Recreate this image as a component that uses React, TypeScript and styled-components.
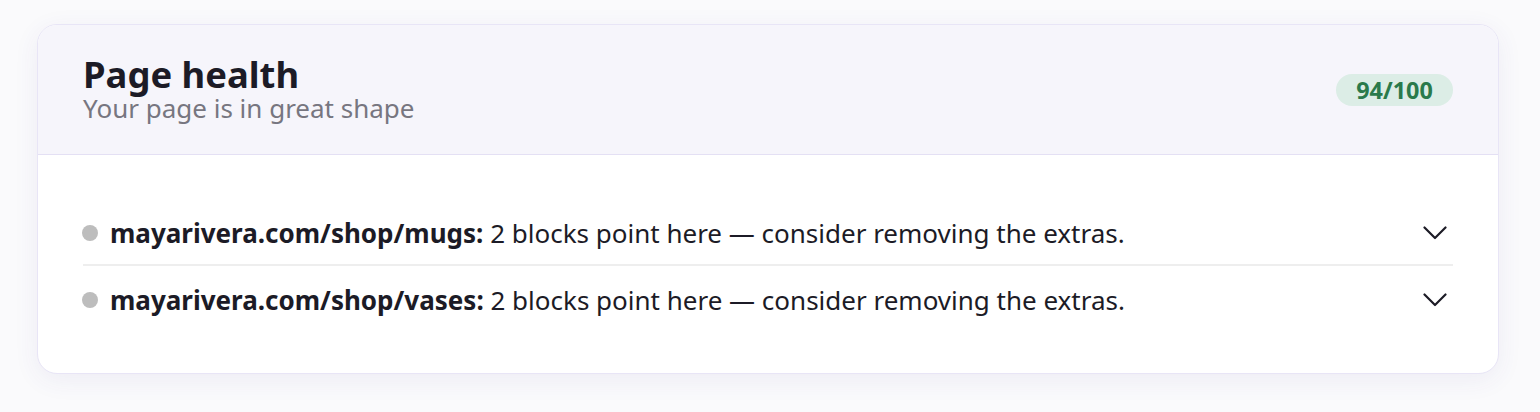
import styled, { createGlobalStyle } from "styled-components";

const GlobalStyle = createGlobalStyle`
  body {
    margin: 0;
    background: #fafafc;
    font-family: "Noto Sans", "Open Sans", sans-serif;
    color: #1c1b26;
  }
`;

const issues = [
  { url: "mayarivera.com/shop/mugs", text: "2 blocks point here — consider removing the extras." },
  { url: "mayarivera.com/shop/vases", text: "2 blocks point here — consider removing the extras." },
];

function Chevron() {
  return (
    <svg width="24" height="24" viewBox="0 0 24 24" fill="none" stroke="#1c1b26" strokeWidth="2.2" strokeLinecap="round" strokeLinejoin="round">
      <path d="M1.5 6.5l10.5 10.5 10.5-10.5" />
    </svg>
  );
}

export default function App() {
  return (
    <>
      <GlobalStyle />
      <Page>
        <Card>
          <Header>
            <div>
              <Title>Page health</Title>
              <Subtitle>Your page is in great shape</Subtitle>
            </div>
            <Score>94/100</Score>
          </Header>
          <Body>
            {issues.map((issue, i) => (
              <Row key={issue.url} $first={i === 0}>
                <Dot />
                <RowText>
                  <strong>{issue.url}:</strong> {issue.text}
                </RowText>
                <Toggle aria-label="Expand">
                  <Chevron />
                </Toggle>
              </Row>
            ))}
          </Body>
        </Card>
      </Page>
    </>
  );
}

const Page = styled.div`
  padding: 24px 41px 38px 37px;
`;

const Card = styled.div`
  background: #fff;
  border: 1px solid #e8e5f6;
  border-radius: 20px;
  overflow: hidden;
  box-shadow: 0 6px 26px rgba(70, 60, 140, 0.07);
`;

const Header = styled.div`
  display: flex;
  align-items: center;
  justify-content: space-between;
  height: 130px;
  padding: 0 45px 4px;
  background: #f6f5fb;
  border-bottom: 1px solid #e4e0f4;
  box-sizing: border-box;
`;

const Title = styled.h1`
  margin: 0;
  font-size: 36.4px;
  font-weight: 700;
  line-height: 40px;
  color: #1c1b26;
`;

const Subtitle = styled.p`
  margin: 0;
  font-size: 26px;
  line-height: 28px;
  color: #777680;
`;

const Score = styled.span`
  display: inline-flex;
  align-items: center;
  justify-content: center;
  width: 117px;
  height: 32px;
  margin-top: 4px;
  border-radius: 16px;
  background: #dcede6;
  color: #2a7a4b;
  font-size: 23.4px;
  font-weight: 700;
`;

const Body = styled.div`
  padding: 44px 45px 42px;
`;

const Row = styled.div<{ $first: boolean }>`
  display: flex;
  align-items: center;
  gap: 12px;
  padding: 16px 0 13px;
  border-top: ${(p) => (p.$first ? "none" : "2px solid #eeeeee")};
`;

const Dot = styled.span`
  flex: none;
  width: 16px;
  height: 16px;
  margin-left: -1px;
  border-radius: 50%;
  background: #bdbdbd;
`;

const RowText = styled.span`
  flex: 1;
  font-size: 26px;
  line-height: 36px;
  color: #1c1b26;

  strong {
    font-weight: 700;
  }
`;

const Toggle = styled.button`
  display: flex;
  align-items: center;
  justify-content: center;
  padding: 0;
  margin-right: 6px;
  border: none;
  background: none;
  cursor: pointer;
`;
